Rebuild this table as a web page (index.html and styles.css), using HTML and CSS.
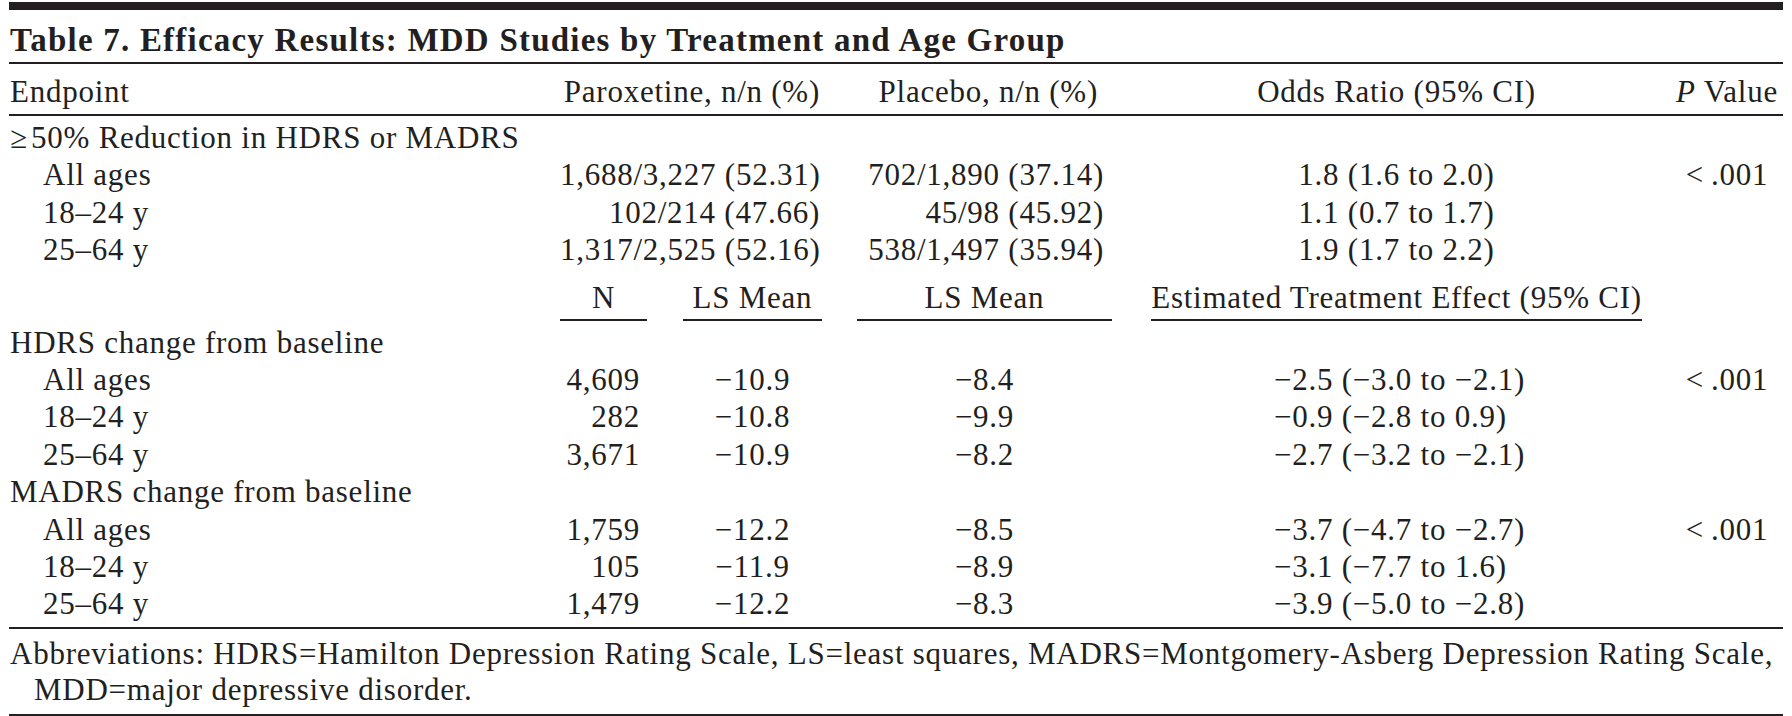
FILE: index.html
```html
<!DOCTYPE html>
<html lang="en">
<head>
<meta charset="utf-8">
<title>Table 7. Efficacy Results</title>
<link rel="stylesheet" href="styles.css">
</head>
<body>
<div class="page">
  <div class="topbar"></div>
  <div class="title">Table 7. Efficacy Results: MDD Studies by Treatment and Age Group</div>

  <div class="grid head">
    <div class="c-label">Endpoint</div>
    <div class="c-parox r">Paroxetine, n/n (%)</div>
    <div class="c-plac r">Placebo, n/n (%)</div>
    <div class="c-eff ctr">Odds Ratio (95% CI)</div>
    <div class="c-p ctr"><i>P</i> Value</div>
  </div>

  <div class="grid body1">
    <div class="c-label">≥&#8202;50% Reduction in HDRS or MADRS</div>

    <div class="c-label ind">All ages</div>
    <div class="c-parox r">1,688/3,227 (52.31)</div>
    <div class="c-plac r">702/1,890 (37.14)</div>
    <div class="c-eff ctr">1.8 (1.6 to 2.0)</div>
    <div class="c-p ctr">&lt;&#8201;.001</div>

    <div class="c-label ind">18–24 y</div>
    <div class="c-parox r">102/214 (47.66)</div>
    <div class="c-plac r">45/98 (45.92)</div>
    <div class="c-eff ctr">1.1 (0.7 to 1.7)</div>

    <div class="c-label ind">25–64 y</div>
    <div class="c-parox r">1,317/2,525 (52.16)</div>
    <div class="c-plac r">538/1,497 (35.94)</div>
    <div class="c-eff ctr">1.9 (1.7 to 2.2)</div>
  </div>

  <div class="grid subhead">
    <div class="c-n ul ctr">N</div>
    <div class="c-ls ul ctr">LS Mean</div>
    <div class="c-plac ul ctr">LS Mean</div>
    <div class="c-eff ul ctr">Estimated Treatment Effect (95% CI)</div>
  </div>

  <div class="grid body2">
    <div class="c-label">HDRS change from baseline</div>

    <div class="c-label ind">All ages</div>
    <div class="c-n r">4,609</div>
    <div class="c-ls ctr">−10.9</div>
    <div class="c-plac ctr">−8.4</div>
    <div class="c-eff est">−2.5 (−3.0 to −2.1)</div>
    <div class="c-p ctr">&lt;&#8201;.001</div>

    <div class="c-label ind">18–24 y</div>
    <div class="c-n r">282</div>
    <div class="c-ls ctr">−10.8</div>
    <div class="c-plac ctr">−9.9</div>
    <div class="c-eff est">−0.9 (−2.8 to 0.9)</div>

    <div class="c-label ind">25–64 y</div>
    <div class="c-n r">3,671</div>
    <div class="c-ls ctr">−10.9</div>
    <div class="c-plac ctr">−8.2</div>
    <div class="c-eff est">−2.7 (−3.2 to −2.1)</div>

    <div class="c-label">MADRS change from baseline</div>

    <div class="c-label ind">All ages</div>
    <div class="c-n r">1,759</div>
    <div class="c-ls ctr">−12.2</div>
    <div class="c-plac ctr">−8.5</div>
    <div class="c-eff est">−3.7 (−4.7 to −2.7)</div>
    <div class="c-p ctr">&lt;&#8201;.001</div>

    <div class="c-label ind">18–24 y</div>
    <div class="c-n r">105</div>
    <div class="c-ls ctr">−11.9</div>
    <div class="c-plac ctr">−8.9</div>
    <div class="c-eff est">−3.1 (−7.7 to 1.6)</div>

    <div class="c-label ind">25–64 y</div>
    <div class="c-n r">1,479</div>
    <div class="c-ls ctr">−12.2</div>
    <div class="c-plac ctr">−8.3</div>
    <div class="c-eff est">−3.9 (−5.0 to −2.8)</div>
  </div>

  <div class="notes">
    <p>Abbreviations: HDRS=Hamilton Depression Rating Scale, LS=least squares, MADRS=Montgomery-Asberg Depression Rating Scale, MDD=major depressive disorder.</p>
  </div>
</div>
</body>
</html>
```

FILE: styles.css
```css
html, body {
  margin: 0;
  padding: 0;
  background: #ffffff;
}

body {
  font-family: "Liberation Serif", "Times New Roman", serif;
  color: #231f20;
  font-size: 31px;
  letter-spacing: 0.75px;
}

.page {
  margin-left: 9px;
  width: 1774px;
  padding-top: 2px;
}

.topbar {
  height: 8px;
  background: #231f20;
}

.title {
  font-weight: bold;
  font-size: 33px;
  letter-spacing: 1.22px;
  line-height: 44px;
  padding: 8px 0 0 1px;
  border-bottom: 2px solid #231f20;
}

.grid {
  display: grid;
  grid-template-columns: 551px 87px 36px 139px 35px 255px 39px 491px 29px 112px;
  line-height: 37.4px;
  white-space: nowrap;
}

.head {
  padding: 8.5px 0 4.5px;
  border-bottom: 2px solid #231f20;
}

.body1 {
  padding-top: 2.5px;
}

.subhead {
  margin-top: 10px;
  line-height: 37px;
}

.body2 {
  padding-top: 2.5px;
  padding-bottom: 4.5px;
  border-bottom: 2px solid #231f20;
}

.c-label { grid-column: 1; padding-left: 1px; }
.c-label.ind { padding-left: 34px; }
.c-parox { grid-column: 2 / 5; padding-right: 2px; }
.c-n { grid-column: 2; }
.c-ls { grid-column: 4; }
.c-plac { grid-column: 6; }
.c-eff { grid-column: 8; }
.c-p { grid-column: 10; }

.body1 .c-label:not(.ind),
.body2 .c-label:not(.ind) { grid-column: 1 / -1; }

.r { text-align: right; }
.ctr { text-align: center; }
.body1 .c-plac { padding-right: 8px; }
.head .c-plac { padding-right: 14px; }
.c-n.r { padding-right: 7px; }
.est { padding-left: 123px; }

.ul {
  border-bottom: 2px solid #231f20;
  padding-bottom: 3.5px;
}

.notes {
  padding: 7px 0 6px;
  border-bottom: 2px solid #231f20;
}

.notes p {
  margin: 0;
  line-height: 36px;
  padding-left: 25px;
  text-indent: -24px;
}
```
